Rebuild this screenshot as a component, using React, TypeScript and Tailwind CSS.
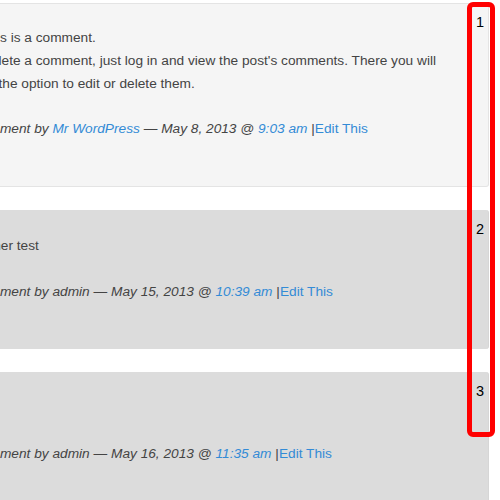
type Comment = {
  n: number;
  lines: string[];
  author: string;
  authorLink?: boolean;
  date: string;
  time: string;
  light?: boolean;
};

const comments: Comment[] = [
  {
    n: 1,
    lines: [
      'Hi, this is a comment.',
      "To delete a comment, just log in and view the post's comments. There you will",
      'have the option to edit or delete them.',
    ],
    author: 'Mr WordPress',
    authorLink: true,
    date: 'May 8, 2013',
    time: '9:03 am',
    light: true,
  },
  { n: 2, lines: ['Another test'], author: 'admin', date: 'May 15, 2013', time: '10:39 am' },
  { n: 3, lines: [''], author: 'admin', date: 'May 16, 2013', time: '11:35 am' },
];

function CommentCard({ c }: { c: Comment }) {
  return (
    <div
      className={`flex rounded-r-[3px] ${
        c.light ? 'bg-[#f5f5f5] border-y border-r border-[#e4e4e4]' : 'bg-[#dcdcdc] border-r border-[#d6d6d6]'
      }`}
    >
      <div className={`flex-1 overflow-hidden ${c.light ? 'pt-[22px] pb-[46px]' : 'pt-[24px] pb-[46px]'}`}>
        <div className="-ml-[35px] text-[#444]">
          {c.lines.map((l, i) => (
            <div key={i} className="h-[23px] leading-[23px] whitespace-nowrap">
              {l}
            </div>
          ))}
        </div>
        <div
          className={`-ml-[29px] h-[23px] leading-[23px] whitespace-nowrap text-[#444] ${
            c.light ? 'mt-[22px]' : 'mt-[23px]'
          }`}
        >
          <i>
            Comment by{' '}
            {c.authorLink ? <a className="text-[#338bd6]">{c.author}</a> : c.author} — {c.date} @{' '}
            <a className="text-[#338bd6]">{c.time}</a>
          </i>{' '}
          |<a className="text-[#338bd6]">Edit This</a>
        </div>
      </div>
      <div className={`w-[12px] text-[14.5px] text-black leading-[20px] ${c.light ? 'pt-[8px]' : 'pt-[9px]'}`}>
        {c.n}
      </div>
    </div>
  );
}

export default function App() {
  return (
    <div
      className="relative w-[500px] h-[500px] overflow-hidden bg-white text-[13.7px]"
      style={{ fontFamily: '"Liberation Sans", Arial, sans-serif' }}
    >
      <div className="flex flex-col gap-[23px] pt-[3px] pr-[11px]">
        {comments.map((c) => (
          <CommentCard key={c.n} c={c} />
        ))}
      </div>
      <div className="absolute left-[467px] top-[2px] w-[28px] h-[435px] border-[5px] border-[#ff0000] rounded-[6px] pointer-events-none" />
    </div>
  );
}
